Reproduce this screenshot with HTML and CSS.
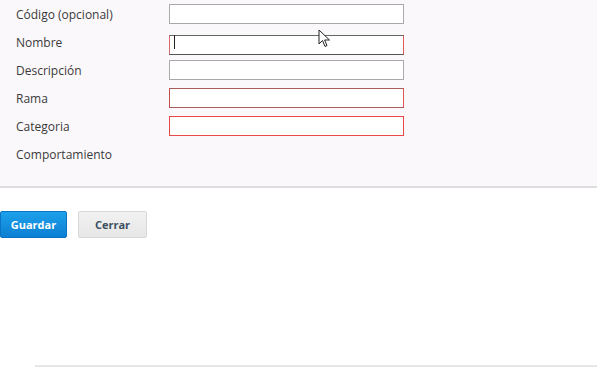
FILE: index.html
```
<!DOCTYPE html>
<html lang="es">
<head>
    <meta charset="UTF-8">
    <meta name="viewport" content="width=device-width, initial-scale=1.0">
    <title>Nuevo elemento</title>
    <link rel="stylesheet" href="styles.css">
</head>
<body>

<div class="form-panel">
    <div class="form-row">
        <label class="form-label">Código (opcional)</label>
        <input class="form-input" type="text">
    </div>
    <div class="form-row">
        <label class="form-label">Nombre</label>
        <div class="input-wrap">
            <input class="form-input focused" type="text">
            <span class="caret"></span>
            <!-- puntero del ratón -->
            <svg class="pointer" width="13" height="19" viewBox="0 0 13 19">
                <path d="M1 1 L1 15 L4.5 11.5 L7 17.5 L9 16.6 L6.6 11 L11.5 11 Z" fill="#fff" stroke="#222" stroke-width="1" stroke-linejoin="round"/>
            </svg>
        </div>
    </div>
    <div class="form-row">
        <label class="form-label">Descripción</label>
        <input class="form-input" type="text">
    </div>
    <div class="form-row">
        <label class="form-label">Rama</label>
        <input class="form-input invalid-dark" type="text">
    </div>
    <div class="form-row">
        <label class="form-label">Categoria</label>
        <input class="form-input invalid" type="text">
    </div>
    <div class="form-row">
        <label class="form-label">Comportamiento</label>
    </div>
</div>

<div class="actions">
    <button class="btn btn-primary">Guardar</button>
    <button class="btn btn-default">Cerrar</button>
</div>

<div class="footer-line"></div>

</body>
</html>
```
FILE: styles.css
```
body, html {
    margin: 0;
    padding: 0;
    background-color: #fff;
    font-family: "Open Sans", "Liberation Sans", sans-serif;
    color: #333;
}
.form-panel {
    background-color: #faf8fa;
    padding: 4px 0 22px 16px;
    border-bottom: 2px solid #dedcde;
    display: flex;
    flex-direction: column;
    gap: 8px;
}
.form-row {
    display: flex;
    align-items: center;
    height: 20px;
}
.form-label {
    width: 153px;
    font-size: 12px;
    color: #3a3a3a;
}
.input-wrap {
    position: relative;
    height: 20px;
}
.form-input {
    box-sizing: border-box;
    width: 235px;
    height: 20px;
    margin: 0;
    padding: 0 4px;
    border: 1px solid #aaa;
    background: #fff;
    outline: none;
}
.form-input.focused {
    border-color: #666 #e05a5a #555 #d46a6a;
}
.form-input.invalid-dark {
    border-color: #a85c5c #e05555 #a85c5c #c05050;
}
.form-input.invalid {
    border-color: #e84848;
}
.caret {
    position: absolute;
    left: 5px;
    top: 3px;
    width: 1px;
    height: 14px;
    background: #222;
}
.pointer {
    position: absolute;
    left: 149px;
    top: -3px;
}
.actions {
    display: flex;
    gap: 11px;
    padding-top: 23px;
}
.btn {
    height: 27px;
    font-family: "Open Sans", "Liberation Sans", sans-serif;
    font-size: 11px;
    font-weight: bold;
    border-radius: 2px;
    cursor: pointer;
}
.btn-primary {
    width: 67px;
    color: #fff;
    border: 1px solid #0a74c4;
    background: linear-gradient(#1da0ea, #0b7fd2);
}
.btn-default {
    width: 69px;
    color: #3b4f63;
    border: 1px solid #d8d8d8;
    background: linear-gradient(#f2f2f2, #e6e6e6);
}
.footer-line {
    margin: 127px 0 0 35px;
    height: 2px;
    background: #e6e6e6;
}
```
